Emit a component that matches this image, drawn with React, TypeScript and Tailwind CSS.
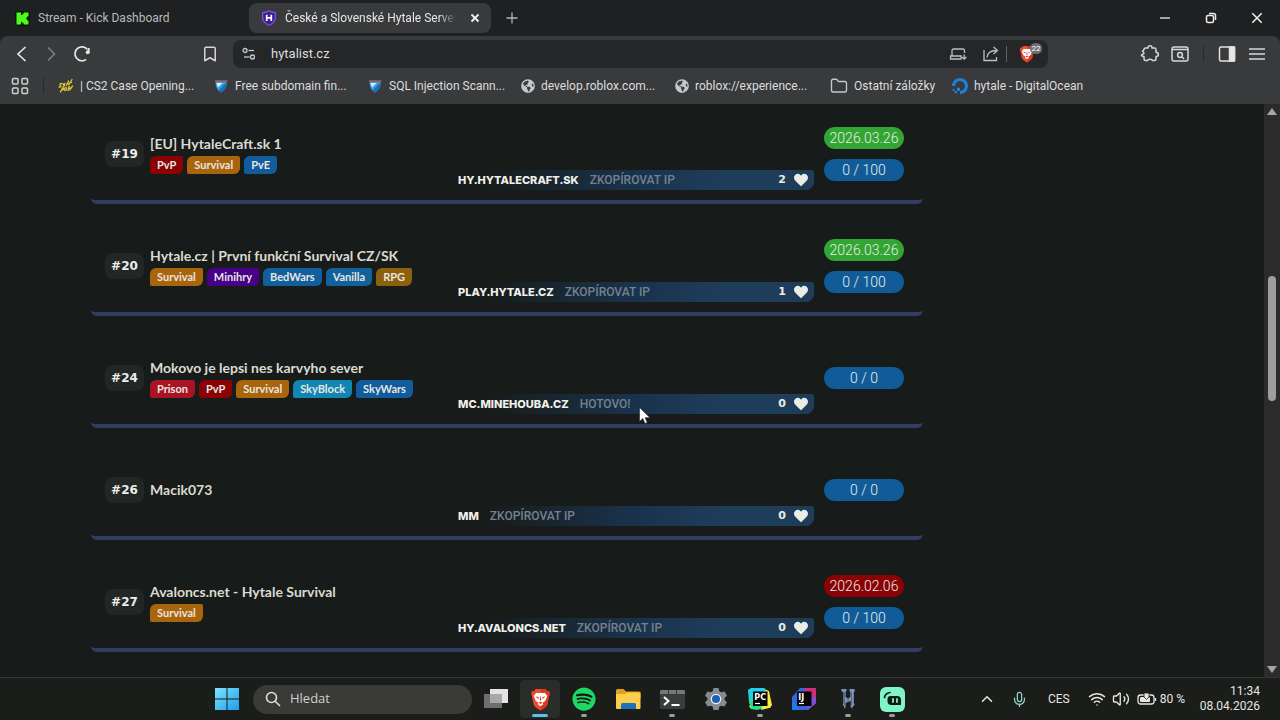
import React from "react";
import { LuBookmark, LuMic, LuWifi, LuVolume2, LuChevronUp, LuFolder } from "react-icons/lu";
import { SiDigitalocean } from "react-icons/si";
import { FaSpotify, FaGlobeAmericas, FaHeart } from "react-icons/fa";

type Tag = { label: string; color: string };
type Server = {
  rank: number;
  name: string;
  tags: Tag[];
  ip: string;
  action: string;
  votes: number;
  date?: { text: string; color: string };
  players: string;
};

const PVP: Tag = { label: "PvP", color: "bg-[#8b0205]" };
const SURVIVAL: Tag = { label: "Survival", color: "bg-[#a9650b]" };

const SERVERS: Server[] = [
  {
    rank: 19,
    name: "[EU] HytaleCraft.sk 1",
    tags: [PVP, SURVIVAL, { label: "PvE", color: "bg-[#115c9c]" }],
    ip: "HY.HYTALECRAFT.SK",
    action: "ZKOPÍROVAT IP",
    votes: 2,
    date: { text: "2026.03.26", color: "bg-[#33a532]" },
    players: "0 / 100",
  },
  {
    rank: 20,
    name: "Hytale.cz | První funkční Survival CZ/SK",
    tags: [
      SURVIVAL,
      { label: "Minihry", color: "bg-[#480088]" },
      { label: "BedWars", color: "bg-[#115f9c]" },
      { label: "Vanilla", color: "bg-[#11629c]" },
      { label: "RPG", color: "bg-[#8b610b]" },
    ],
    ip: "PLAY.HYTALE.CZ",
    action: "ZKOPÍROVAT IP",
    votes: 1,
    date: { text: "2026.03.26", color: "bg-[#33a532]" },
    players: "0 / 100",
  },
  {
    rank: 24,
    name: "Mokovo je lepsi nes karvyho sever",
    tags: [
      { label: "Prison", color: "bg-[#a91425]" },
      PVP,
      SURVIVAL,
      { label: "SkyBlock", color: "bg-[#1186b2]" },
      { label: "SkyWars", color: "bg-[#115c9c]" },
    ],
    ip: "MC.MINEHOUBA.CZ",
    action: "HOTOVO!",
    votes: 0,
    players: "0 / 0",
  },
  { rank: 26, name: "Macik073", tags: [], ip: "MM", action: "ZKOPÍROVAT IP", votes: 0, players: "0 / 0" },
  {
    rank: 27,
    name: "Avaloncs.net - Hytale Survival",
    tags: [SURVIVAL],
    ip: "HY.AVALONCS.NET",
    action: "ZKOPÍROVAT IP",
    votes: 0,
    date: { text: "2026.02.06", color: "bg-[#8b0205]" },
    players: "0 / 100",
  },
];

function KickIcon() {
  return (
    <svg className="size-[15px]" viewBox="0 0 15 15">
      <rect width="15" height="15" rx="2" fill="#0b1a08" />
      <path d="M1.500 1.500h4.500v2.500h1.500v-1.500h1.500v-1h4.500v4h-1.500v1.500h-1v1h1v1.500h1.500v4h-4.500v-1h-1.500v-1.500h-1.500v2.500h-4.500z" fill="#4cfb1b" />
    </svg>
  );
}

function ShieldH() {
  return (
    <svg className="size-4" viewBox="0 0 16 16">
      <path d="M8 .8c2 1.300 4 1.800 6.300 1.800v5.200c0 3.600-2.500 6-6.300 7.500C4.200 13.800 1.700 11.400 1.700 7.800V2.600C4 2.600 6 2.100 8 .8z" fill="#3a2290" stroke="#8a52e8" strokeWidth="1.200" />
      <path d="M5.700 4.700v6.200M10.300 4.700v6.200M5.700 7.800h4.600" stroke="#fff" strokeWidth="1.700" />
    </svg>
  );
}

function NeonIcon() {
  return (
    <svg className="size-4" viewBox="0 0 16 16" fill="none" stroke="#d8c93a" strokeWidth="1.300" strokeLinecap="round">
      <path d="M3.500 5.500C2 5.500 1.500 6.800 2.500 7.500S3 9.500 1 9M5 5.500c0 2 1.300 1.800 2-.5-.2 2.500-.7 3.500-2 4.200M10.500 3 8.500 7.500M14 1.500l-3 5M13.500 4.500 9 6M2.500 14l2-4c1.500-.3 1.500 1.700-.5 2M7.500 9.500c-1.700 1-1.300 3.500 0 3s1.500-3 0-3zM10 12.500l1-4 1 3L14.500 8" />
    </svg>
  );
}

function ScanShield() {
  return (
    <svg className="size-4" viewBox="0 0 16 16">
      <path d="M2.500 3.500h11.500c0 5-2 8.500-6 11-4-2.500-5.500-6-5.500-11z" fill="#3ba0e0" />
      <path d="M14 3.500 5.500 12.500C7 14 8 14.500 8 14.500c4-2.500 6-6 6-11z" fill="#1a70ba" />
      <path d="M3.500 5h6L5 9.500z" fill="#e4edf3" />
      <path d="M2 2.300h12.500v1.200H2z" fill="#b5635a" />
    </svg>
  );
}

function BraveLion({ className }: { className: string }) {
  return (
    <svg className={className} viewBox="0 0 20 22">
      <path d="M5.500 1h9l2 2 1.700-.2.800 3-.8 1.800L16.500 16c-.5 1.500-3 3.500-6.500 5.500C6.500 19.500 4 17.500 3.500 16L1.800 7.600 1 5.800l.8-3 1.700.2z" fill="#ee4b2b" />
      <path d="M10 1h4.500l2 2 1.700-.2.800 3-.8 1.800L16.500 16c-.5 1.500-3 3.500-6.500 5.500z" fill="#d93a1f" />
      <path d="M6 4.500 8.300 5l1.700-.5 1.700.500L14 4.500l2.500 3-1 2.500-1 2.500-2.500 1.500.6 1.500L10 17.500l-2.600-2 .6-1.500-2.500-1.500-1-2.500-1-2.500z" fill="#fff" />
      <path d="M5.500 8 8.500 9v1.200L6.500 9.500zM14.500 8l-3 1v1.200l2-.7zM10 7l.8 4.500-.8.800-.8-.8zM8 14l2-1 2 1-2 1.300z" fill="#e2452a" />
    </svg>
  );
}

const BOOKMARKS = [
  { icon: <NeonIcon />, label: "| CS2 Case Opening...", width: "w-[155px]" },
  { icon: <ScanShield />, label: "Free subdomain fin...", width: "w-[154px]" },
  { icon: <ScanShield />, label: "SQL Injection Scann...", width: "w-[154px]" },
  { icon: <FaGlobeAmericas className="size-[14px] text-[#c6c7c8]" />, label: "develop.roblox.com...", width: "w-[154px]" },
  { icon: <FaGlobeAmericas className="size-[14px] text-[#c6c7c8]" />, label: "roblox://experience...", width: "w-[155px]" },
  { icon: <LuFolder className="size-[18px] text-[#c6c7c8]" strokeWidth={1.8} />, label: "Ostatní záložky", width: "w-[122px]" },
  { icon: <SiDigitalocean className="size-4 text-[#1c82df]" />, label: "hytale - DigitalOcean", width: "w-[160px]" },
];

function TabStrip() {
  return (
    <header className="flex h-9 shrink-0 items-center bg-[#1f2021] text-[12px] text-[#b9babb]">
      <button className="flex h-[30px] w-[249px] items-center gap-2 pl-[15px] text-left">
        <KickIcon />
        <span>Stream - Kick Dashboard</span>
      </button>
      <div className="flex h-[30px] w-[242px] items-center rounded-lg bg-[#393a3c] pr-1 pl-3 text-[#e6e6e6]">
        <ShieldH />
        <span className="ml-2 w-[171px] overflow-hidden mask-r-from-90% whitespace-nowrap">České a Slovenské Hytale Servery</span>
        <button aria-label="Zavřít kartu" className="ml-auto p-1">
          <svg className="size-4" viewBox="0 0 16 16" stroke="#f4f4f4" strokeWidth="1.800"><path d="M4.500 4.500l7 7M11.500 4.500l-7 7" /></svg>
        </button>
      </div>
      <button aria-label="Nová karta" className="ml-[11px] p-[2px]">
        <svg className="size-4" viewBox="0 0 16 16" stroke="#b4b5b6" strokeWidth="1.300"><path d="M8 2.500v11M2.500 8h11" /></svg>
      </button>
      <div className="ml-auto flex items-center">
        <button aria-label="Minimalizovat" className="flex w-[46px] justify-center">
          <svg className="size-4" viewBox="0 0 16 16" stroke="#ededed" strokeWidth="1.300"><path d="M3 8h10" /></svg>
        </button>
        <button aria-label="Obnovit" className="flex w-[46px] justify-center">
          <svg className="size-4" viewBox="0 0 16 16" fill="none" stroke="#ededed" strokeWidth="1.500"><rect x="3.500" y="5.500" width="7" height="7" rx="1.500" /><path d="M6 3.500h4.500a2 2 0 0 1 2 2V10" /></svg>
        </button>
        <button aria-label="Zavřít" className="flex w-[46px] justify-center">
          <svg className="size-4" viewBox="0 0 16 16" stroke="#f0f0f0" strokeWidth="1.500"><path d="M3.300 3.300l9.400 9.400M12.700 3.300l-9.400 9.400" /></svg>
        </button>
      </div>
    </header>
  );
}

function Toolbar() {
  return (
    <div className="flex h-9 items-center">
      <nav className="flex w-[233px] shrink-0 items-center pl-3">
        <button aria-label="Zpět" className="mr-[10px]">
          <svg className="size-5" viewBox="0 0 20 20" fill="none" stroke="#e4e4e4" strokeWidth="1.700"><path d="M13.500 3 6 10l7.500 7" /></svg>
        </button>
        <button aria-label="Vpřed" className="mr-[10px]">
          <svg className="size-5" viewBox="0 0 20 20" fill="none" stroke="#7c7d7e" strokeWidth="1.700"><path d="M6 3.500 12.500 10 6 16.500" /></svg>
        </button>
        <button aria-label="Znovu načíst">
          <svg className="size-5" viewBox="0 0 20 20" fill="none" stroke="#e4e4e4" strokeWidth="1.700"><path d="M14.200 15.400A7 7 0 1 1 15.500 5.500" /><circle cx="15.700" cy="8.300" r="2" fill="#e4e4e4" stroke="none" /><path d="M16.800 4v4" /></svg>
        </button>
        <button aria-label="Přidat záložku" className="mr-[14px] ml-auto">
          <LuBookmark className="size-[18px] text-[#d5d5d5]" strokeWidth={2} />
        </button>
      </nav>
      <div className="flex h-7 w-[815px] items-center rounded-lg bg-[#242628] pr-[5px] pl-2">
        <svg className="size-4" viewBox="0 0 16 16" fill="none" stroke="#c9cacb" strokeWidth="1.300"><circle cx="4" cy="4.500" r="2" /><path d="M7.500 4.500H13" /><circle cx="11.500" cy="11" r="2" /><path d="M3 11h5.500" /></svg>
        <input aria-label="Adresa" defaultValue="hytalist.cz" className="ml-[14px] min-w-0 flex-1 bg-transparent text-[13px] text-[#dcdddd] outline-none" />
        <button aria-label="Instalovat">
          <svg className="size-[18px]" viewBox="0 0 18 18" fill="none" stroke="#bdbebf" strokeWidth="1.300"><path d="M15.500 8V5.500a1.500 1.500 0 0 0-1.500-1.500H4.500A1.500 1.500 0 0 0 3 5.500V11M1.500 11h10.500v3H1.500zM15.200 9.500v4.500M13 12l2.200 2.200L17.400 12" /></svg>
        </button>
        <button aria-label="Sdílet" className="ml-[15px]">
          <svg className="size-[18px]" viewBox="0 0 18 18" fill="none" stroke="#bdbebf" strokeWidth="1.300"><path d="M2 5v10.500h12.500V12M5 12.500c.5-4.500 3-7 9-7M11.500 2 15.500 5.500 11.500 9" /></svg>
        </button>
        <span className="mx-[6px] h-4 w-px bg-[#606162]" />
        <button aria-label="Brave Shields" className="relative ml-[6px] flex h-5 w-6 items-center">
          <BraveLion className="h-[18px] w-4" />
          <span className="absolute -top-px right-px flex h-[11px] w-3 items-center justify-center rounded-full bg-[#6c6f78] text-[8px] text-white">22</span>
        </button>
      </div>
      <div className="ml-auto flex items-center pr-[13px]">
        <button aria-label="Rozšíření">
          <svg className="size-5" viewBox="0 0 20 20" fill="none" stroke="#d6d7d7" strokeWidth="1.500" strokeLinejoin="round"><path d="M4 5.500A1.500 1.500 0 0 1 5.500 4H8c-.5-3 4.500-3 4 0h2.500A1.500 1.500 0 0 1 16 5.500v2.800c3.200.2 3.200 4 0 4.200v2.500a1.500 1.500 0 0 1-1.500 1.500h-2c-.5-1.800-4.500-1.800-5 0h-2A1.500 1.500 0 0 1 4 15v-2.500c-3.200-.2-3.200-1.700-1.200-2.200C4.800 9.500 4 8.500 2.500 7.500z" /></svg>
        </button>
        <button aria-label="Hledat na kartách" className="ml-[10px]">
          <svg className="size-5" viewBox="0 0 20 20" fill="none" stroke="#d6d7d7" strokeWidth="1.500"><rect x="2" y="3" width="16" height="14" rx="2" /><path d="M2 5.500h16M12 13l2 2" /><circle cx="10" cy="11" r="2.400" /></svg>
        </button>
        <span className="mx-[13px] h-4 w-px bg-[#27292a]" />
        <button aria-label="Boční panel">
          <svg className="size-5" viewBox="0 0 20 20" fill="none" stroke="#e2e2e2" strokeWidth="1.500"><rect x="2.500" y="3" width="15" height="14" rx="1.500" /><path d="M12.500 3h5v14h-5z" fill="#e8e8e8" /></svg>
        </button>
        <button aria-label="Nabídka" className="ml-[10px]">
          <svg className="size-5" viewBox="0 0 20 20" stroke="#d6d7d7" strokeWidth="1.500"><path d="M2 5h16M2 10h16M2 15h16" /></svg>
        </button>
      </div>
    </div>
  );
}

function BookmarksBar() {
  return (
    <nav className="flex h-8 items-center pb-1 pl-[10px] text-[12px] text-[#dddede]">
      <button aria-label="Aplikace" className="mr-[13px]">
        <svg className="size-5" viewBox="0 0 20 20" fill="none" stroke="#cfd0d0" strokeWidth="1.500"><rect x="2.500" y="2.500" width="5.500" height="5.500" rx="1" /><rect x="12" y="2.500" width="5.500" height="5.500" rx="1" /><rect x="2.500" y="12" width="5.500" height="5.500" rx="1" /><rect x="12" y="12" width="5.500" height="5.500" rx="1" /></svg>
      </button>
      <span className="mr-[14px] h-4 w-px bg-[#27292a]" />
      {BOOKMARKS.map((b) => (
        <a key={b.label} href="#" className={`flex shrink-0 items-center gap-[6px] whitespace-nowrap ${b.width}`}>
          {b.icon}
          {b.label}
        </a>
      ))}
    </nav>
  );
}

function ServerCard({ server }: { server: Server }) {
  return (
    <li className="grid h-[100px] grid-cols-[39px_minmax(0,1fr)_364px_90px] items-center rounded-md border-b-4 border-[#2f3e60] pt-1 pr-[19px] pl-[14px]">
      <span className="flex h-[26px] items-center justify-center rounded-lg bg-[#222726] font-['DejaVu_Sans'] text-[12px] font-bold text-[#eceeed]">
        #{server.rank}
      </span>
      <div className="flex flex-col gap-[2px] pl-[6px]">
        <h2 className="text-[14px] leading-5 font-bold whitespace-nowrap text-[#dcdad0]">{server.name}</h2>
        {server.tags.length > 0 && (
          <div className="flex gap-1">
            {server.tags.map((t) => (
              <span key={t.label} className={`h-[18px] rounded-xs rounded-tl-md rounded-br-md px-[7px] text-[11px] leading-[18px] font-bold text-[#e8e6e1] ${t.color}`}>
                {t.label}
              </span>
            ))}
          </div>
        )}
      </div>
      <div className="mb-[10px] flex h-5 items-center self-end rounded-r-xs rounded-br-lg bg-linear-to-r from-[#171b1a] from-10% via-[#19324c] via-50% to-[#1e3d5a] to-75% pr-[6px] pl-2">
        <span className="font-[Inter] text-[11px] font-extrabold text-[#f0f0ea]">{server.ip}</span>
        <button className="ml-[11px] font-[Roboto] text-[12px] font-medium text-[#75828d]">{server.action}</button>
        <span className="ml-auto font-['DejaVu_Sans'] text-[11px] font-bold text-[#ecece6]">{server.votes}</span>
        <button aria-label="Hlasovat" className="ml-2">
          <FaHeart className="size-[14px] text-[#ecece6]" />
        </button>
      </div>
      <div className="ml-[10px] flex flex-col gap-[10px] text-center font-[Roboto] text-[14px] leading-[22px] font-light text-[#e6f0ea]">
        {server.date && <span className={`rounded-full ${server.date.color}`}>{server.date.text}</span>}
        <span className="rounded-full bg-[#115c98]">{server.players}</span>
      </div>
    </li>
  );
}

function Scrollbar() {
  return (
    <div className="flex w-4 shrink-0 flex-col items-center bg-[#2a2b2a] py-1">
      <svg className="h-[7px] w-[10px]" viewBox="0 0 10 7"><path d="M5 0 10 7H0z" fill="#a5a6a6" /></svg>
      <div className="flex w-2 flex-1 flex-col py-1">
        <span className="basis-[29%]" />
        <span className="basis-[23%] rounded-full bg-[#9d9e9e]" />
      </div>
      <svg className="h-[7px] w-[10px]" viewBox="0 0 10 7"><path d="M0 0h10L5 7z" fill="#a5a6a6" /></svg>
    </div>
  );
}

function ProductIcon({ text, kind }: { text: string; kind: "pc" | "ij" }) {
  return (
    <svg className="size-6" viewBox="0 0 24 24">
      {kind === "pc" ? (
        <>
          <path d="M0 3 3 1h13l4 3v11L3 20 1 15z" fill="#21d0e8" />
          <path d="M18 3l3 1 1 5 2 9-2 3H10l-7 1-2-3z" fill="#f6ee3e" />
          <path d="M1 14 7 8l12 12-10 3-6-1z" fill="#28e08c" />
          <path d="M15 17h7l-1 4-8 2z" fill="#e8ee44" />
        </>
      ) : (
        <>
          <path d="M0 10 8 1h16v15l-8 7H0z" fill="#3b62d8" />
          <path d="M12 1h12v15l-4 3z" fill="#c9307c" />
          <path d="M22 9l2 2v5l-8 7-2-4z" fill="#7a50d8" />
          <path d="M0 12l8 11H0z" fill="#1b7cf0" />
        </>
      )}
      <rect x="5" y="4.500" width="14.500" height="14.500" fill="#050505" />
      <text x="6.300" y="12.500" fontFamily="DejaVu Sans" fontSize="8" fontWeight="700" fill="#fff">{text}</text>
      <path d="M7 16.500h5" stroke="#fff" strokeWidth="1.200" />
    </svg>
  );
}

const APPS: { name: string; icon: React.ReactNode; running?: boolean; active?: boolean }[] = [
  {
    name: "Zobrazení úkolů",
    icon: (
      <svg className="size-6" viewBox="0 0 24 24"><rect x="6" y="2" width="18" height="14" fill="#e3e3e3" /><rect x="0" y="7" width="18" height="14" fill="#6d6e6d" /><path d="M6 7h12v9H6z" fill="#a7a8a7" /></svg>
    ),
  },
  { name: "Brave", icon: <BraveLion className="h-[23px] w-[21px]" />, active: true },
  {
    name: "Spotify",
    icon: <span className="flex rounded-full bg-[#0e1510]"><FaSpotify className="size-6 text-[#1fd665]" /></span>,
    running: true,
  },
  {
    name: "Průzkumník souborů",
    icon: (
      <svg className="size-[26px]" viewBox="0 0 26 26"><path d="M1 4.500a1.500 1.500 0 0 1 1.500-1.500h6L11 5.500h13a1.500 1.500 0 0 1 1.500 1.500v6H1z" fill="#e0a020" /><path d="M1 8h9l2-1.500h13.500V22a1 1 0 0 1-1 1H2a1 1 0 0 1-1-1z" fill="#fbce4c" /><path d="M6 23v-4.500A1.500 1.500 0 0 1 7.500 17h12a1.500 1.500 0 0 1 1.500 1.500V23z" fill="#1b72b8" /></svg>
    ),
  },
  {
    name: "Terminál",
    icon: (
      <svg className="size-[25px]" viewBox="0 0 25 25"><rect x="0" y="3" width="25" height="19" rx="1.500" fill="#3b3c3c" /><path d="M0 4.500A1.500 1.500 0 0 1 1.500 3h22A1.500 1.500 0 0 1 25 4.500V7H0z" fill="#777878" /><path d="M8 3h1v4H8zM16 3h1v4h-1z" fill="#3b3c3c" /><path d="M4 10l4.500 4L4 18M11.500 18h8" fill="none" stroke="#fff" strokeWidth="2" /></svg>
    ),
    running: true,
  },
  {
    name: "Nastavení",
    icon: (
      <svg className="size-6" viewBox="0 0 24 24"><path d="M9.500 1h5l.8 3.200 2 1.100 3.200-.9 2.500 4.300-2.400 2.300v2l2.400 2.300-2.500 4.300-3.200-.9-2 1.100-.8 3.200h-5l-.8-3.200-2-1.100-3.200.9L1 15.300 3.400 13v-2L1 8.700l2.500-4.300 3.200.9 2-1.100z" fill="#858b93" /><circle cx="12" cy="12" r="5.300" fill="#e9eef3" /><circle cx="12" cy="12" r="4" fill="#1863b4" /></svg>
    ),
  },
  { name: "PyCharm", icon: <ProductIcon text="PC" kind="pc" />, running: true },
  { name: "IntelliJ IDEA", icon: <ProductIcon text="IJ" kind="ij" /> },
  {
    name: "Hytale",
    icon: (
      <svg className="h-5 w-[14px]" viewBox="0 0 18 20" preserveAspectRatio="none"><path d="M1 0h6v2l-1 1v5l3 1.500L12 8V3l-1-1V0h6l1 2-1.500 1v11l1 2-3 2v2l-2-2v-6L9 13l-2.500 1-.5-1v5l-2 2v-3l-2-1 1-2V3L0 2z" fill="#7d93b4" /><path d="M4.500 3v13M13.500 3v13M9 9v4" stroke="#4c6084" strokeWidth="1" /></svg>
    ),
    running: true,
  },
  {
    name: "Streamlabs",
    icon: (
      <svg className="size-[25px]" viewBox="0 0 25 25"><rect width="25" height="25" rx="6" fill="#7ff4c4" /><path d="M4.500 10.500C5 7.500 7 6 10 5.500" fill="none" stroke="#0d1a18" strokeWidth="1.700" strokeLinecap="round" /><path d="M10.500 9H17a4 4 0 0 1 4 4v5h-9.500a4 4 0 0 1-4-4v-2a3 3 0 0 1 3-3z" fill="#0d1a18" /><path d="M13 12v3M17 12v3" stroke="#7ff4c4" strokeWidth="1.800" strokeLinecap="round" /></svg>
    ),
    running: true,
  },
];

function Taskbar() {
  return (
    <footer className="flex h-[43px] shrink-0 items-center border-t border-[#353735] bg-[#1b1d1a] pr-5 pl-[205px] text-[12px] text-[#e6e6e4]">
      <button aria-label="Start" className="flex w-11 justify-center">
        <svg className="size-6" viewBox="0 0 24 24"><defs><linearGradient id="win" x1="0" y1="0" x2="1" y2="1"><stop offset="0" stopColor="#7fe3fb" /><stop offset="1" stopColor="#1b9fec" /></linearGradient></defs><path d="M0 1h11.500v10.500H0zM12.500 1H24v10.500H12.500zM0 12.500h11.500V23H0zM12.500 12.500H24V23H12.500z" fill="url(#win)" /></svg>
      </button>
      <label className="ml-1 flex h-[29px] w-[219px] items-center rounded-full bg-[#3a3b39] pl-3">
        <svg className="size-4" viewBox="0 0 16 16" fill="none" stroke="#dededc" strokeWidth="1.600"><circle cx="6.500" cy="6.500" r="5" /><path d="M10.200 10.200 15 15" /></svg>
        <input aria-label="Hledat" placeholder="Hledat" className="ml-[9px] min-w-0 flex-1 bg-transparent font-['Open_Sans'] text-[13px] outline-none placeholder:text-[#cfd0ce]" />
      </label>
      <div className="ml-[2px] flex">
        {APPS.map((a) => (
          <button key={a.name} aria-label={a.name} className="relative flex h-10 w-11 items-center justify-center">
            {a.active && <span className="absolute inset-x-[2px] inset-y-px rounded bg-[#2a2c2a]" />}
            <span className="relative">{a.icon}</span>
            {a.active && <span className="absolute bottom-[2px] h-[3px] w-4 rounded-full bg-[#5cbfe6]" />}
            {a.running && <span className="absolute bottom-[2px] h-[3px] w-[6px] rounded-full bg-[#9a9b9a]" />}
          </button>
        ))}
      </div>
      <div className="ml-auto flex items-center">
        <LuChevronUp className="size-[18px]" strokeWidth={2} />
        <LuMic className="ml-[15px] size-[17px] text-[#8fd0c8]" strokeWidth={1.8} />
        <span className="ml-5">CES</span>
        <LuWifi className="ml-[18px] size-[18px]" />
        <LuVolume2 className="ml-[6px] size-[18px]" strokeWidth={1.8} />
        <svg className="ml-[7px] h-[14px] w-5" viewBox="0 0 20 14" fill="none" stroke="#e6e6e4" strokeWidth="1.300"><rect x="1" y="3" width="16" height="9" rx="2.500" /><rect x="3" y="5" width="10" height="5" rx="1" fill="#e6e6e4" stroke="none" /><path d="M18.500 6v3" /><path d="M7 1h5v4L9.500 7.500 7 5z" fill="#e6e6e4" stroke="#1b1d1a" strokeWidth=".8" /></svg>
        <span className="ml-[3px] w-[28px] whitespace-nowrap">80 %</span>
        <time className="ml-3 text-right leading-[15px]">
          <span className="block">11:34</span>
          <span className="block">08.04.2026</span>
        </time>
      </div>
    </footer>
  );
}

export default function App() {
  return (
    <div className="relative flex h-screen min-w-[1100px] flex-col overflow-hidden bg-[#1f2021] font-[Roboto,sans-serif]">
      <TabStrip />
      <div className="shrink-0 rounded-t-lg bg-[#393a3c]">
        <Toolbar />
        <BookmarksBar />
      </div>
      <div className="flex min-h-0 flex-1 bg-[#171b1a]">
        <main className="min-w-0 flex-1 overflow-hidden pl-[91px] font-[Lato,sans-serif]">
          <ul className="flex max-w-[832px] flex-col gap-3">
            {SERVERS.map((s) => (
              <ServerCard key={s.rank} server={s} />
            ))}
          </ul>
        </main>
        <Scrollbar />
      </div>
      <Taskbar />
      <svg className="pointer-events-none absolute top-[407px] left-[639px] h-[18px] w-3" viewBox="0 0 12 18"><path d="M.5.5v14l3.300-3 2.200 5 2.300-1-2.200-4.800h4.900z" fill="#fff" stroke="#222" strokeWidth=".6" /></svg>
    </div>
  );
}
